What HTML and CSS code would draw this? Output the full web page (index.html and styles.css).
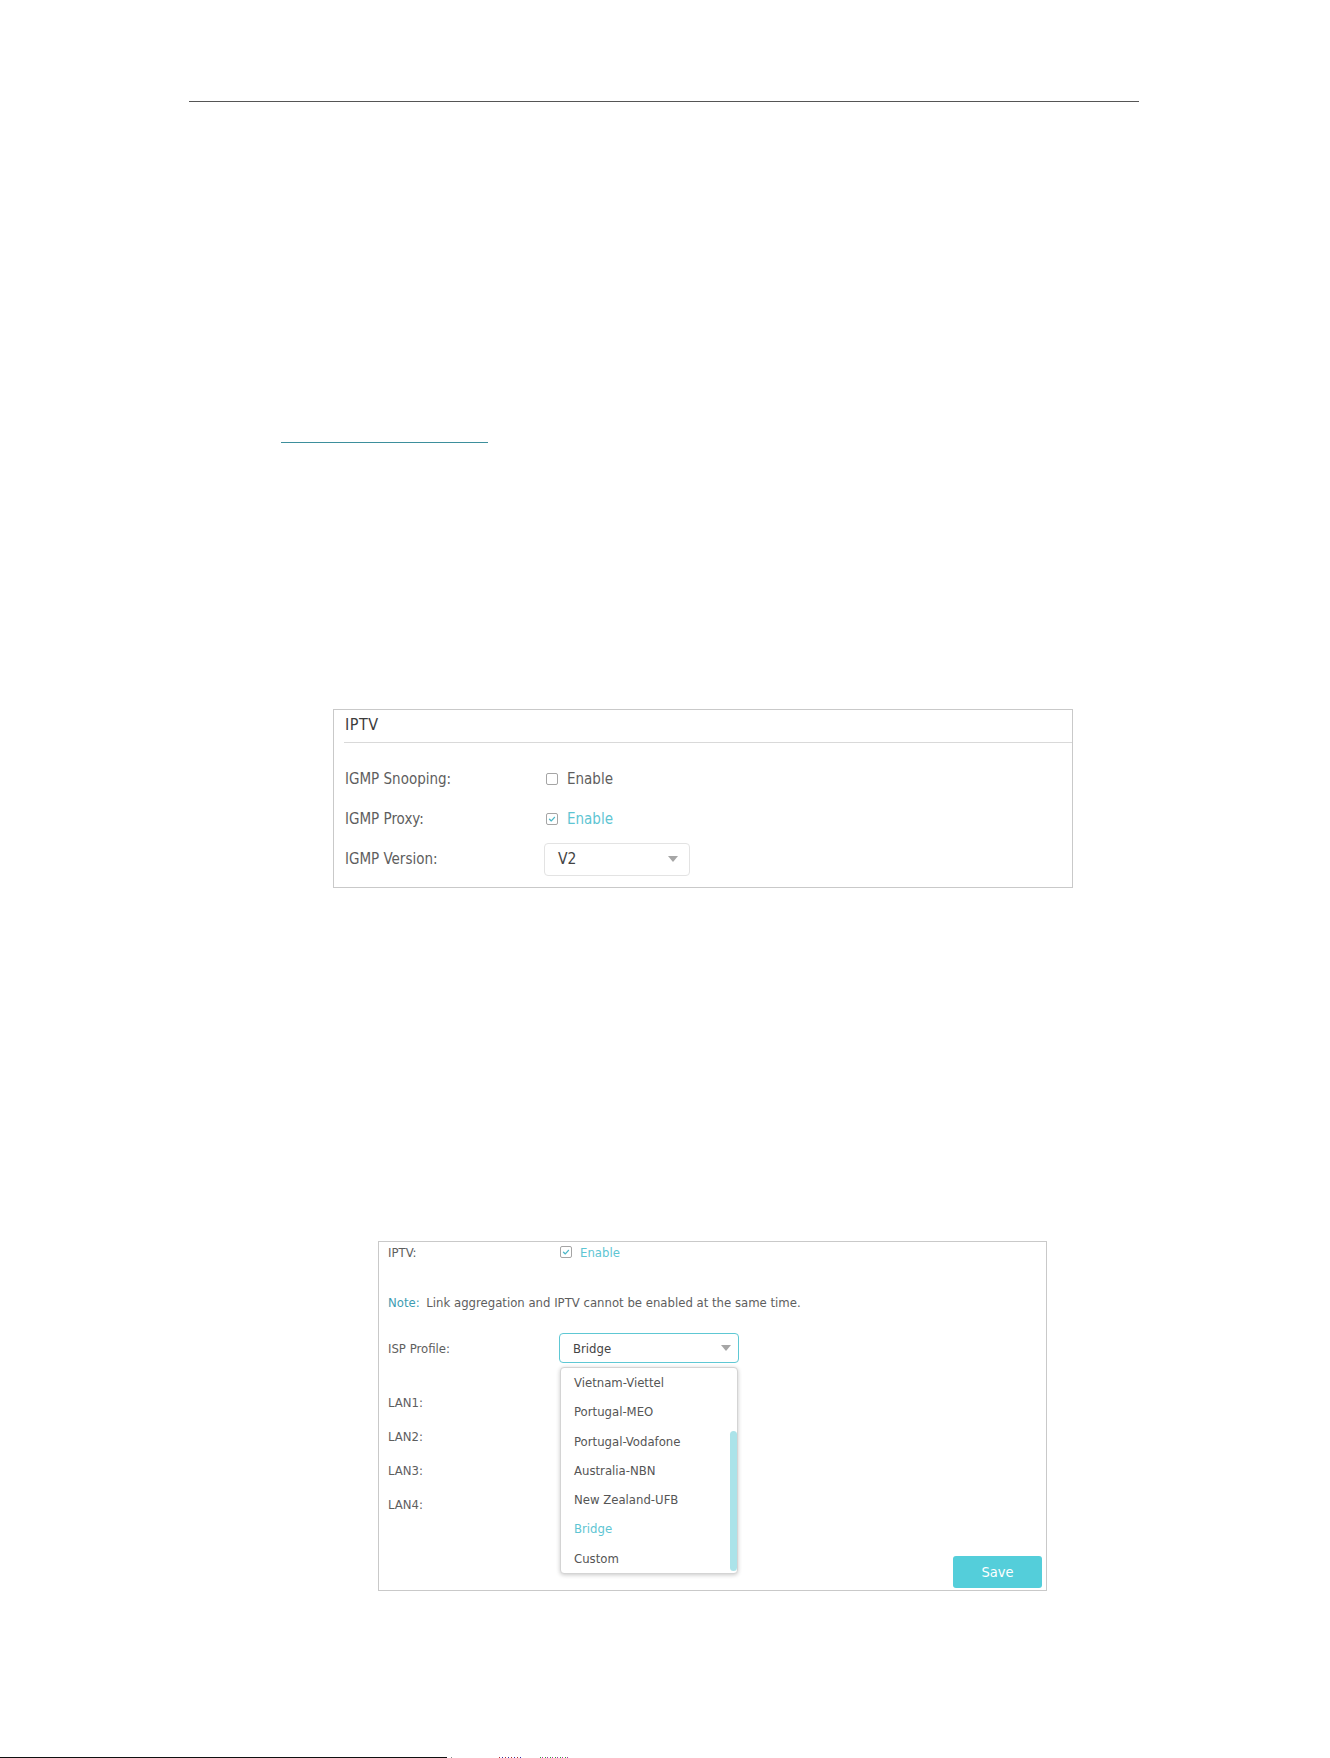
FILE: index.html
```html
<!doctype html>
<html>
<head>
<meta charset="utf-8">
<title>IPTV</title>
<link rel="stylesheet" href="styles.css">
</head>

<body>
<div class="page">
	<div class="top-rule"></div>
	<a class="ref-link" href="#"></a>

	<!-- IGMP settings panel -->
	<div class="panel igmp">
		<div class="panel-title">IPTV</div>
		<div class="panel-body">
			<div class="row">
				<span class="label">IGMP Snooping:</span>
				<span class="check"></span><span class="check-text">Enable</span>
			</div>
			<div class="row">
				<span class="label">IGMP Proxy:</span>
				<span class="check on"><svg viewBox="0 0 12 12"><polyline points="3,6.2 5.2,8.3 9,4"/></svg></span><span class="check-text on">Enable</span>
			</div>
			<div class="row">
				<span class="label">IGMP Version:</span>
				<div class="select">
					<span>V2</span>
					<svg class="caret" viewBox="0 0 10 6"><polygon points="0,0 10,0 5,6"/></svg>
				</div>
			</div>
		</div>
	</div>

	<!-- ISP profile panel -->
	<div class="panel isp">
		<div class="row r-iptv">
			<span class="label">IPTV:</span>
			<span class="check on"><svg viewBox="0 0 12 12"><polyline points="3,6.2 5.2,8.3 9,4"/></svg></span><span class="check-text on">Enable</span>
		</div>
		<p class="r-note"><span class="note-key">Note:</span> Link aggregation and IPTV cannot be enabled at the same time.</p>
		<div class="row r-isp">
			<span class="label">ISP Profile:</span>
			<div class="select active">
				<span>Bridge</span>
				<svg class="caret" viewBox="0 0 10 6"><polygon points="0,0 10,0 5,6"/></svg>
				<ul class="menu">
					<li>Vietnam-Viettel</li>
					<li>Portugal-MEO</li>
					<li>Portugal-Vodafone</li>
					<li>Australia-NBN</li>
					<li>New Zealand-UFB</li>
					<li class="cur">Bridge</li>
					<li>Custom</li>
					<span class="scroll"></span>
				</ul>
			</div>
		</div>
		<div class="lans">
			<div class="row r-lan"><span class="label">LAN1:</span></div>
			<div class="row r-lan"><span class="label">LAN2:</span></div>
			<div class="row r-lan"><span class="label">LAN3:</span></div>
			<div class="row r-lan"><span class="label">LAN4:</span></div>
		</div>
		<div class="actions">
			<button class="btn-save">Save</button>
		</div>
	</div>

	<div class="foot">
		<span class="foot-line"></span>
		<span class="speck s1"></span>
		<span class="speck s2"></span>
		<span class="speck s3"></span>
	</div>
</div>
</body>
</html>
```

FILE: styles.css
```css
*{margin:0; padding:0; box-sizing:border-box; list-style:none;}
body{background:#fff; font-family:"DejaVu Sans Condensed","DejaVu Sans","Liberation Sans",sans-serif; color:#5e5e5e;}
.page{width:1330px; height:1758px; overflow:hidden;}

.top-rule{margin:101px 0 0 189px; width:950px; height:1px; background:#555;}
.ref-link{display:block; margin:340px 0 0 281px; width:207px; height:1px; background:#3d8f9c;}

.panel{border:1px solid #c9c9c9; background:#fff;}
.row{display:flex; align-items:center;}

/* panel 1 */
.igmp{margin:266px 0 0 333px; width:740px; height:179px; font-size:15px;}
.igmp .panel-title{margin-left:10px; padding-left:1px; height:33px; line-height:30px; border-bottom:1px solid #d9d9d9; font-size:16px; letter-spacing:0.5px; color:#3c3c3c;}
.igmp .panel-body{padding:16px 0 0 11px;}
.igmp .row{height:40px;}
.igmp .label{width:199px;}
.igmp .check{margin-left:2px; width:12px; height:12px;}
.igmp .check-text{margin-left:9px;}
.igmp .select{width:146px; height:33px; padding-left:13px; border-color:#e3e3e3; font-size:15.5px;}
.igmp .caret{right:11px;}

.check{display:inline-flex; border:1px solid #a5a5a5; border-radius:2px; background:#fff;}
.check svg{width:100%; height:100%;}
.check polyline{fill:none; stroke:#4cb8c8; stroke-width:1.6; stroke-linecap:round; stroke-linejoin:round;}
.check-text.on{color:#5ec5d3;}

.select{position:relative; display:flex; align-items:center; border:1px solid #ddd; border-radius:4px; color:#444;}
.caret{position:absolute; top:50%; margin-top:-3px; width:10px; height:6px;}
.caret polygon{fill:#a6a6a6;}

/* panel 2 */
.isp{margin:353px 0 0 378px; width:669px; height:350px; padding:0 4px 2px 9px; font-size:13px;}
.isp .label{width:171px;}
.isp .check{margin-left:1px; width:12px; height:12px;}
.isp .check-text{margin-left:8px;}
.r-iptv{height:20px;}
.r-note{margin-top:31px; height:20px; line-height:20px; white-space:nowrap;}
.note-key{margin-right:3px; color:#3e9cb2;}
.r-isp{margin-top:20px; height:30px;}
.isp .select{width:180px; height:30px; padding-left:13px; border-color:#5ec8d4;}
.isp .caret{right:7px;}
.lans{margin-top:22px;}
.r-lan{height:34px;}

.menu{position:absolute; top:33px; left:0; width:178px; height:207px; border:1px solid #d4d4d4; border-radius:4px; background:#fff; box-shadow:0 1px 4px rgba(0,0,0,0.22); z-index:2;}
.menu li{height:29.3px; line-height:29.3px; padding-left:13px; color:#555;}
.menu li.cur{color:#5ec5d3;}
.menu .scroll{position:absolute; right:0; top:63px; width:7px; height:140px; border-radius:4px; background:#abe3e9;}

.actions{display:flex; justify-content:flex-end; margin-top:35px;}
.btn-save{width:89px; height:32px; border:0; border-radius:3px; background:#54ceda; color:#fff; font-family:inherit; font-size:14.5px;}

.foot{display:flex; margin-top:166px; height:1px;}
.foot-line{width:447px; height:1px; background:#111;}
.speck{height:1px; background:#888;}
.s1{margin-left:4px; width:1px;}
.s2{margin-left:47px; width:24px; background:repeating-linear-gradient(90deg,#a33 0 1px,#fff 1px 3px,#33a 3px 4px,#fff 4px 6px);}
.s3{margin-left:17px; width:28px; background:repeating-linear-gradient(90deg,#3a3 0 1px,#fff 1px 2px,#a3a 2px 3px,#fff 3px 5px);}
```
